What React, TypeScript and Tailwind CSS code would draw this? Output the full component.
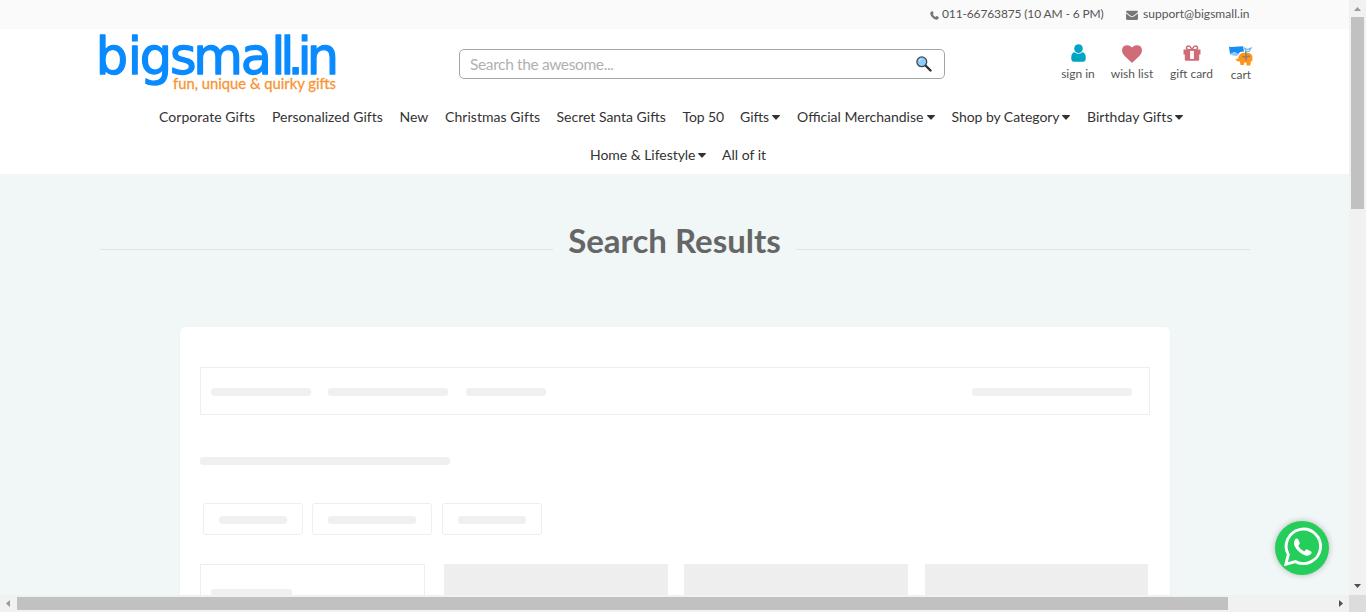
import React from "react";

type NavItem = { label: string; width: string; text: string; menu?: boolean };

const firstRow: NavItem[] = [
  { label: "Corporate Gifts", width: "w-[113px]", text: "tracking-[0.05px]" },
  { label: "Personalized Gifts", width: "w-[127.5px]", text: "tracking-[0.02px]" },
  { label: "New", width: "w-[45.5px]", text: "w-[29px]" },
  { label: "Christmas Gifts", width: "w-[111.5px]", text: "tracking-[0.05px]" },
  { label: "Secret Santa Gifts", width: "w-[126px]", text: "w-[109px]" },
  { label: "Top 50", width: "w-[57.5px]", text: "tracking-[-0.1px]" },
  { label: "Gifts", width: "w-[57px]", text: "w-[32px]", menu: true },
  { label: "Official Merchandise", width: "w-[154.5px]", text: "w-[129.5px]", menu: true },
  { label: "Shop by Category", width: "w-[135.5px]", text: "w-[110.5px] tracking-[-0.05px]", menu: true },
  { label: "Birthday Gifts", width: "w-[98px]", text: "w-[88px] tracking-[0.05px]", menu: true },
];

const secondRow: NavItem[] = [
  { label: "Home & Lifestyle", width: "w-[132px]", text: "w-[107.5px] tracking-[-0.04px]", menu: true },
  { label: "All of it", width: "w-[45px]", text: "w-[44px]" },
];

function NavRow({ items }: { items: NavItem[] }) {
  return (
    <>
      {items.map((item) => (
        <li key={item.label} className={`flex shrink-0 whitespace-nowrap ${item.width}`}>
          <span className={item.text}>{item.label}</span>
          {item.menu && <Caret />}
        </li>
      ))}
    </>
  );
}

function Caret() {
  return (
    <svg className="mt-[9px] h-[5px] w-[8px] shrink-0" viewBox="0 0 8 5" fill="#333">
      <path d="M.4 0h7.2q.6.3.1.9L4.4 4.6q-.4.4-.8 0L.3.9Q-.2.3.4 0Z" />
    </svg>
  );
}

function Logo() {
  return (
    <svg className="h-[64px] w-[238px] overflow-visible" viewBox="0 0 238 64">
      <text
        x="-3.2 28.8 40.7 71 94.2 141.7 172.2 181.2 188.5 198.5 207.800"
        y="40"
        fontFamily="'DejaVu Sans', sans-serif"
        fontSize="51"
        fill="#0a8aff"
        stroke="#0a8aff"
        strokeWidth="1.300"
        strokeLinejoin="round"
      >
        bigsmall.in
      </text>
      <text x="74" y="55" fontFamily="Lato, sans-serif" fontSize="15.5" fill="#f79433" stroke="#f79433" strokeWidth=".3" textLength="163" lengthAdjust="spacingAndGlyphs">
        fun, unique &amp; quirky gifts
      </text>
    </svg>
  );
}

function Phone() {
  return (
    <svg className="mt-[11px] h-[9px] w-[9px]" viewBox="0 0 9 9" fill="#777">
      <path d="M2 .2q.6-.4.9.2l.7 1.5q.2.5-.8 1.2.7 1.8 2.8 2.9.9-1.1 1.3-.9l1.7.9q.4.3.2.8Q8.200 8.700 6.600 8.800 3.700 8.300 1.600 5.700.2 3.800.2 2.200.5.800 2 .2Z" />
    </svg>
  );
}

function Envelope() {
  return (
    <svg className="ml-[22px] mt-[10px] h-[10px] w-[12px]" viewBox="0 0 12 10" fill="#777">
      <path d="M1 .7h10q1 .1.9 1.1-.3.9-1.200 1.500L7.300 5.700Q6 6.700 4.700 5.700L1.300 3.300Q.3 2.600.1 1.800 0 .8 1 .7Z" />
      <path d="M0 3.500 4.200 6.500q1.800 1.200 3.600 0L12 3.500V8.700q-.1 1.100-1.100 1.200H1.100Q.1 9.800 0 8.700Z" />
    </svg>
  );
}

function UserIcon() {
  return (
    <svg className="h-[18px] w-[15px]" viewBox="0 0 15 18" fill="#00a5c4">
      <circle cx="7.500" cy="4.600" r="4.300" />
      <path d="M3.700 8.300q3.800 3.100 7.600 0Q14.800 8.700 14.800 14q0 3.600-2.700 3.700H2.900Q.2 17.600.2 14 .2 8.700 3.700 8.300Z" />
    </svg>
  );
}

function HeartIcon() {
  return (
    <svg className="h-[18px] w-[20px]" viewBox="0 0 20 18" fill="#cf6c78">
      <path d="M10 17.700q-.4 0-.8-.4L2.200 10.500Q0 8.300 0 5.500 0 .3 5.500.2 7.800.2 10 2.500 12.200.2 14.500.2 20 .3 20 5.500q0 2.800-2.200 5l-7 6.800q-.4.4-.8.400Z" />
    </svg>
  );
}

function GiftIcon() {
  return (
    <svg className="mt-px h-[16px] w-[18px]" viewBox="0 0 18 16" fill="#cf6c78">
      <path fillRule="evenodd" d="M.5 4.500h17v5h-1.300v5.200q0 1-1 1H2.800q-1 0-1-1V9.500H.5ZM7.100 5.800v8.200h3.800V5.800Z" />
      <path d="M9 4.800H6Q3.500 4.600 3.500 2.900 3.600 1 5.500 1q1.300 0 2 1.200L9 4.800Zm0 0h3q2.500-.2 2.500-1.900Q14.400 1 12.500 1q-1.300 0-2 1.200Z" fill="none" stroke="#cf6c78" strokeWidth="1.500" />
    </svg>
  );
}

function Magnifier() {
  return (
    <svg className="h-4 w-4" viewBox="0 0 16 16">
      <path d="m9.500 9.500 5 5" stroke="#263238" strokeWidth="2.400" strokeLinecap="round" />
      <circle cx="5.800" cy="5.800" r="4.900" fill="#90caf9" stroke="#37474f" strokeWidth="1.300" />
      <path d="M3 5.200q.8-2 2.800-2" fill="none" stroke="#d5ecff" strokeWidth="1" />
    </svg>
  );
}

function CartArt() {
  return (
    <svg className="h-[22px] w-6" viewBox="0 0 24 22">
      <path d="M0 2.500 2 3l12-.8 1 5.300L11 8 9 10.500 5.500 8 1 10Z" fill="#168cf5" />
      <path d="m.5 10.500 5-2.500L10 10l-2 2-4-.5Z" fill="#8ccafa" />
      <path d="M6 14.500q1.500 1.600 3.200 0Q10 9 14.500 8.800H19q4.500.8 4.500 5.300l-.3 3.400-1.200-.6L21.200 21.500h-3.400l-.6-3h-2l-.4 2.500h-3.300l-.6-3.800q-3 1.300-4.900-2.700Z" fill="#ff9418" />
      <path d="m16.800 7 .3 9.500M13.500 13l7.500-.7" stroke="#8b8274" strokeWidth="1.500" />
      <path d="m17 7-1.500-3 3 1.500L22 4l-2 3.500Z" fill="none" stroke="#73b8ed" strokeWidth="1.200" />
    </svg>
  );
}

function WhatsApp() {
  return (
    <svg className="h-[38px] w-[38px] overflow-visible" viewBox="0 0 38 38" fill="none">
      <path d="M5.300 25.600A17.200 17.200 0 1 1 12.500 32.600L2.900 35.200Z" stroke="white" strokeWidth="2.900" />
      <path d="M12 10.500q1.200-1.600 2.700-.8.500.3.900 1.500l1.200 2.900q.2.900-1.500 3 2.100 4 6 5.400 2-2.500 2.600-2.200l4.300 2.100q.7.500.3 1.900-1 2.300-4.200 2.500-3.300-.1-8.300-4Q11.200 18.200 11 14.500q0-2.400 1-4Z" fill="white" />
    </svg>
  );
}

function Bar({ className }: { className: string }) {
  return <div className={`h-2 rounded-[3px] bg-[#f0f0f0] ${className}`} />;
}

export default function App() {
  return (
    <div className="grid h-[612px] w-[1366px] grid-cols-[1349px_17px] grid-rows-[595px_17px] overflow-hidden bg-[#f1f1f1] font-['Lato',sans-serif]">
      <div className="relative overflow-hidden bg-[#f1f6f7]">
        <div className="h-[29px] bg-[#fafafa] text-[12px] leading-[28px] text-[#555]">
          <div className="flex h-full whitespace-nowrap pl-[930px]">
            <Phone />
            <span className="ml-[3px] w-[162px] tracking-[-0.14px]">011-66763875 (10 AM - 6 PM)</span>
            <Envelope />
            <span className="ml-[5px] tracking-[0.04px]">support@bigsmall.in</span>
          </div>
        </div>
        <header className="h-[145px] bg-white">
          <div className="flex h-[69px] pl-[99px]">
            <div className="mt-[5px] w-[360px]"><Logo /></div>
            <div className="mt-[20px] flex h-[30px] w-[486px] items-center justify-between rounded-[5px] border border-[#a5a5a5] pl-[10px] pr-[12px] text-[15.5px] tracking-[-0.37px] text-[#b0b0b0]">
              <span className="pt-[2px]">Search the awesome...</span>
              <Magnifier />
            </div>
            <div className="ml-[108px] flex pt-[15px] text-[12px] leading-[16px] text-[#555]">
              <div className="flex w-[50px] flex-col items-center whitespace-nowrap">
                <UserIcon />
                <span className="mt-[4px]">sign in</span>
              </div>
              <div className="flex w-[58px] flex-col items-center whitespace-nowrap">
                <div className="pt-px"><HeartIcon /></div>
                <span className="mt-[3px]">wish list</span>
              </div>
              <div className="flex w-[61px] flex-col items-center whitespace-nowrap">
                <GiftIcon />
                <span className="mt-[5px]">gift card</span>
              </div>
              <div className="flex w-[38px] flex-col items-center whitespace-nowrap">
                <CartArt />
                <span className="mt-px">cart</span>
              </div>
            </div>
          </div>
          <nav className="text-[14px] leading-[22px] text-[#333]">
            <ul className="flex h-[38px] pl-[159px] pt-[8px]"><NavRow items={firstRow} /></ul>
            <ul className="flex h-[38px] pl-[590px] pt-[8px]"><NavRow items={secondRow} /></ul>
          </nav>
        </header>
        <main>
          <div className="mx-[100px] flex h-[153px] w-[1150px] pt-[43px]">
            <div className="mt-[32px] h-px w-[453px] bg-[#dee3e4]" />
            <h1 className="w-[243px] whitespace-nowrap text-center text-[33px] leading-[46px] font-bold text-[#666]">Search Results</h1>
            <div className="mt-[32px] h-px w-[454px] bg-[#dee3e4]" />
          </div>
          <section className="ml-[180px] h-[400px] w-[990px] rounded-[5px] bg-white px-5 pt-10 shadow-[0_0_2px_rgba(0,0,0,0.06)]">
            <div className="flex h-[48px] items-center border border-[#eee] pl-[10px] pr-[17px] pt-[2px]">
              <Bar className="w-[100px]" />
              <Bar className="ml-[17px] w-[120px]" />
              <Bar className="ml-[18px] w-[80px]" />
              <Bar className="ml-auto w-[160px]" />
            </div>
            <Bar className="mt-[42px] w-[250px]" />
            <div className="ml-[3px] mt-[38px] flex">
              <div className="flex h-[32px] w-[100px] items-center rounded-[3px] border border-[#eee] pl-[15px] pt-[2px]"><Bar className="w-[68px]" /></div>
              <div className="ml-[9px] flex h-[32px] w-[120px] items-center rounded-[3px] border border-[#eee] pl-[15px] pt-[2px]"><Bar className="w-[88px]" /></div>
              <div className="ml-[10px] flex h-[32px] w-[100px] items-center rounded-[3px] border border-[#eee] pl-[15px] pt-[2px]"><Bar className="w-[68px]" /></div>
            </div>
            <div className="mt-[29px] flex h-[60px]">
              <div className="w-[225px] border border-[#eee] pl-[10px] pt-[24px]"><Bar className="w-[81px]" /></div>
              <div className="ml-[19px] w-[224px] bg-[#eee]" />
              <div className="ml-[16px] w-[224px] bg-[#eee]" />
              <div className="ml-[17px] w-[223px] bg-[#eee]" />
            </div>
          </section>
        </main>
        <div className="absolute left-[1275px] top-[521px] flex h-[54px] w-[54px] items-center justify-center rounded-full bg-[#25cd5a] shadow-[0_0_6px_rgba(0,0,0,0.25)]">
          <WhatsApp />
        </div>
      </div>
      <div className="flex flex-col items-center">
        <svg className="h-[17px] w-[17px]" viewBox="0 0 17 17"><path d="m5 11 3.500-4 3.500 4Z" fill="#999" /></svg>
        <div className="h-[192px] w-[13px] bg-[#c1c1c1]" />
        <svg className="mt-auto h-[17px] w-[17px]" viewBox="0 0 17 17"><path d="m5 6 3.500 4L12 6Z" fill="#505050" /></svg>
      </div>
      <div className="flex items-center">
        <svg className="h-[17px] w-[17px]" viewBox="0 0 17 17"><path d="M10 5 6 8.500l4 3.500Z" fill="#999" /></svg>
        <div className="h-[13px] w-[1211px] bg-[#c1c1c1]" />
        <svg className="ml-auto h-[17px] w-[17px]" viewBox="0 0 17 17"><path d="m7 5 4 3.500L7 12Z" fill="#505050" /></svg>
      </div>
      <div className="bg-[#dcdcdc]" />
    </div>
  );
}
